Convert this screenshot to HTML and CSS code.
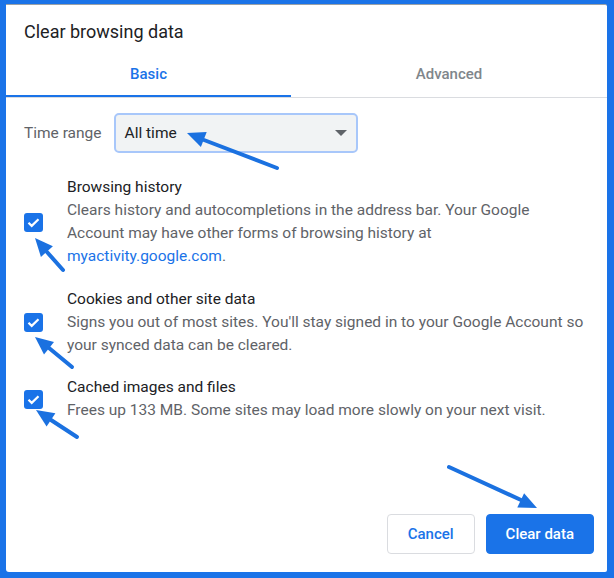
FILE: index.html
```html
<!DOCTYPE html>
<html lang="en">
<head>
  <meta charset="UTF-8" />
  <title>Clear browsing data</title>
  <link rel="stylesheet" href="styles.css">
</head>
<body>
  <div class="dialog">
    <h1 class="title">Clear browsing data</h1>

    <div class="tabs">
      <div class="tab active">Basic</div>
      <div class="tab">Advanced</div>
    </div>

    <div class="range-row">
      <span class="range-label">Time range</span>
      <div class="select">
        <span>All time</span>
        <span class="caret"></span>
      </div>
    </div>

    <div class="items">
      <div class="item">
        <span class="check">
          <svg width="19" height="19" viewBox="0 0 19 19"><path d="M4.5 9.8l3.2 3.1 6.8-6.6" fill="none" stroke="#fff" stroke-width="2.2"/></svg>
        </span>
        <div class="item-text">
          <div class="item-title">Browsing history</div>
          <div class="item-desc">Clears history and autocompletions in the address bar. Your Google Account may have other forms of browsing history at <a href="#">myactivity.google.com</a>.</div>
        </div>
      </div>
      <div class="item">
        <span class="check">
          <svg width="19" height="19" viewBox="0 0 19 19"><path d="M4.5 9.8l3.2 3.1 6.8-6.6" fill="none" stroke="#fff" stroke-width="2.2"/></svg>
        </span>
        <div class="item-text">
          <div class="item-title">Cookies and other site data</div>
          <div class="item-desc">Signs you out of most sites. You'll stay signed in to your Google Account so your synced data can be cleared.</div>
        </div>
      </div>
      <div class="item">
        <span class="check">
          <svg width="19" height="19" viewBox="0 0 19 19"><path d="M4.5 9.8l3.2 3.1 6.8-6.6" fill="none" stroke="#fff" stroke-width="2.2"/></svg>
        </span>
        <div class="item-text">
          <div class="item-title">Cached images and files</div>
          <div class="item-desc">Frees up 133 MB. Some sites may load more slowly on your next visit.</div>
        </div>
      </div>
    </div>

    <div class="actions">
      <button class="btn btn-cancel">Cancel</button>
      <button class="btn btn-primary">Clear data</button>
    </div>
  </div>

  <!-- annotation arrows drawn over the dialog -->
  <svg class="arrows" width="614" height="578" viewBox="0 0 614 578">
    <g stroke="#1b71e0" stroke-width="4" stroke-linecap="round" fill="none">
      <line x1="277" y1="168" x2="204" y2="140"/>
      <line x1="63" y1="270" x2="47" y2="252"/>
      <line x1="72" y1="367" x2="49" y2="348"/>
      <line x1="77" y1="437" x2="51" y2="420"/>
      <line x1="449" y1="467" x2="521" y2="500"/>
    </g>
    <g fill="#1b71e0">
      <polygon points="187,133 206.7,132 200.9,147"/>
      <polygon points="35,238 52.9,246.3 40.9,256.9"/>
      <polygon points="35,337 54,342.1 44,354.5"/>
      <polygon points="36,410 55.4,413.2 46.6,426.6"/>
      <polygon points="537,508 517.3,507.6 524.1,493.2"/>
    </g>
  </svg>
</body>
</html>
```

FILE: styles.css
```css
body { margin: 0; background: #1a73e8; font-family: Roboto, "Liberation Sans", Arial, sans-serif; position: relative; width: 614px; height: 578px; overflow: hidden; }

.dialog { margin: 4px 7px 6px 6px; height: 567px; background: #fff; border-top: 1px solid #9aa0a6; border-radius: 0 2px 2px 3px; display: flex; flex-direction: column; }

.title { margin: 0; padding: 15px 0 0 18px; font-size: 18px; line-height: 24px; font-weight: 400; color: #202124; }

.tabs { display: grid; grid-template-columns: 285px 1fr; border-bottom: 1px solid #dadce0; }
.tab { text-align: center; font-size: 15px; line-height: 20px; font-weight: 500; color: #80868b; padding: 20px 0 11px; border-bottom: 2px solid transparent; }
.tab.active { color: #1a73e8; border-bottom-color: #1a73e8; }

.range-row { display: flex; align-items: center; gap: 12px; padding: 15px 0 0 18px; }
.range-label { font-size: 15.5px; color: #5f6368; }
.select { width: 222px; height: 36px; border: 2px solid #a8c7fa; border-radius: 5px; background: #f1f3f4; display: flex; align-items: center; justify-content: space-between; padding: 0 9px; font-size: 15.5px; color: #202124; }
.caret { width: 0; height: 0; border-left: 6px solid transparent; border-right: 6px solid transparent; border-top: 6px solid #5f6368; }

.items { display: flex; flex-direction: column; gap: 19.5px; padding: 23px 19px 0 18px; }
.item { display: flex; align-items: center; gap: 24px; }
.check { width: 19px; height: 19px; flex: none; background: #1a73e8; border-radius: 3px; display: flex; }
.item-text { font-size: 15.5px; line-height: 23px; }
.item-title { color: #202124; }
.item-desc { color: #5f6368; }
.item-desc a { color: #1a73e8; text-decoration: none; }

.actions { margin-top: auto; display: flex; justify-content: flex-end; gap: 11px; padding: 0 13px 18px 0; }
.btn { height: 40px; padding: 0 19px; border-radius: 4px; font-family: inherit; font-size: 15px; font-weight: 500; }
.btn-cancel { background: #fff; color: #1a73e8; border: 1px solid #dadce0; padding: 0 20px; }
.btn-primary { background: #1a73e8; color: #fff; border: 1px solid #1a73e8; }

.arrows { position: absolute; top: 0; left: 0; pointer-events: none; }
```
